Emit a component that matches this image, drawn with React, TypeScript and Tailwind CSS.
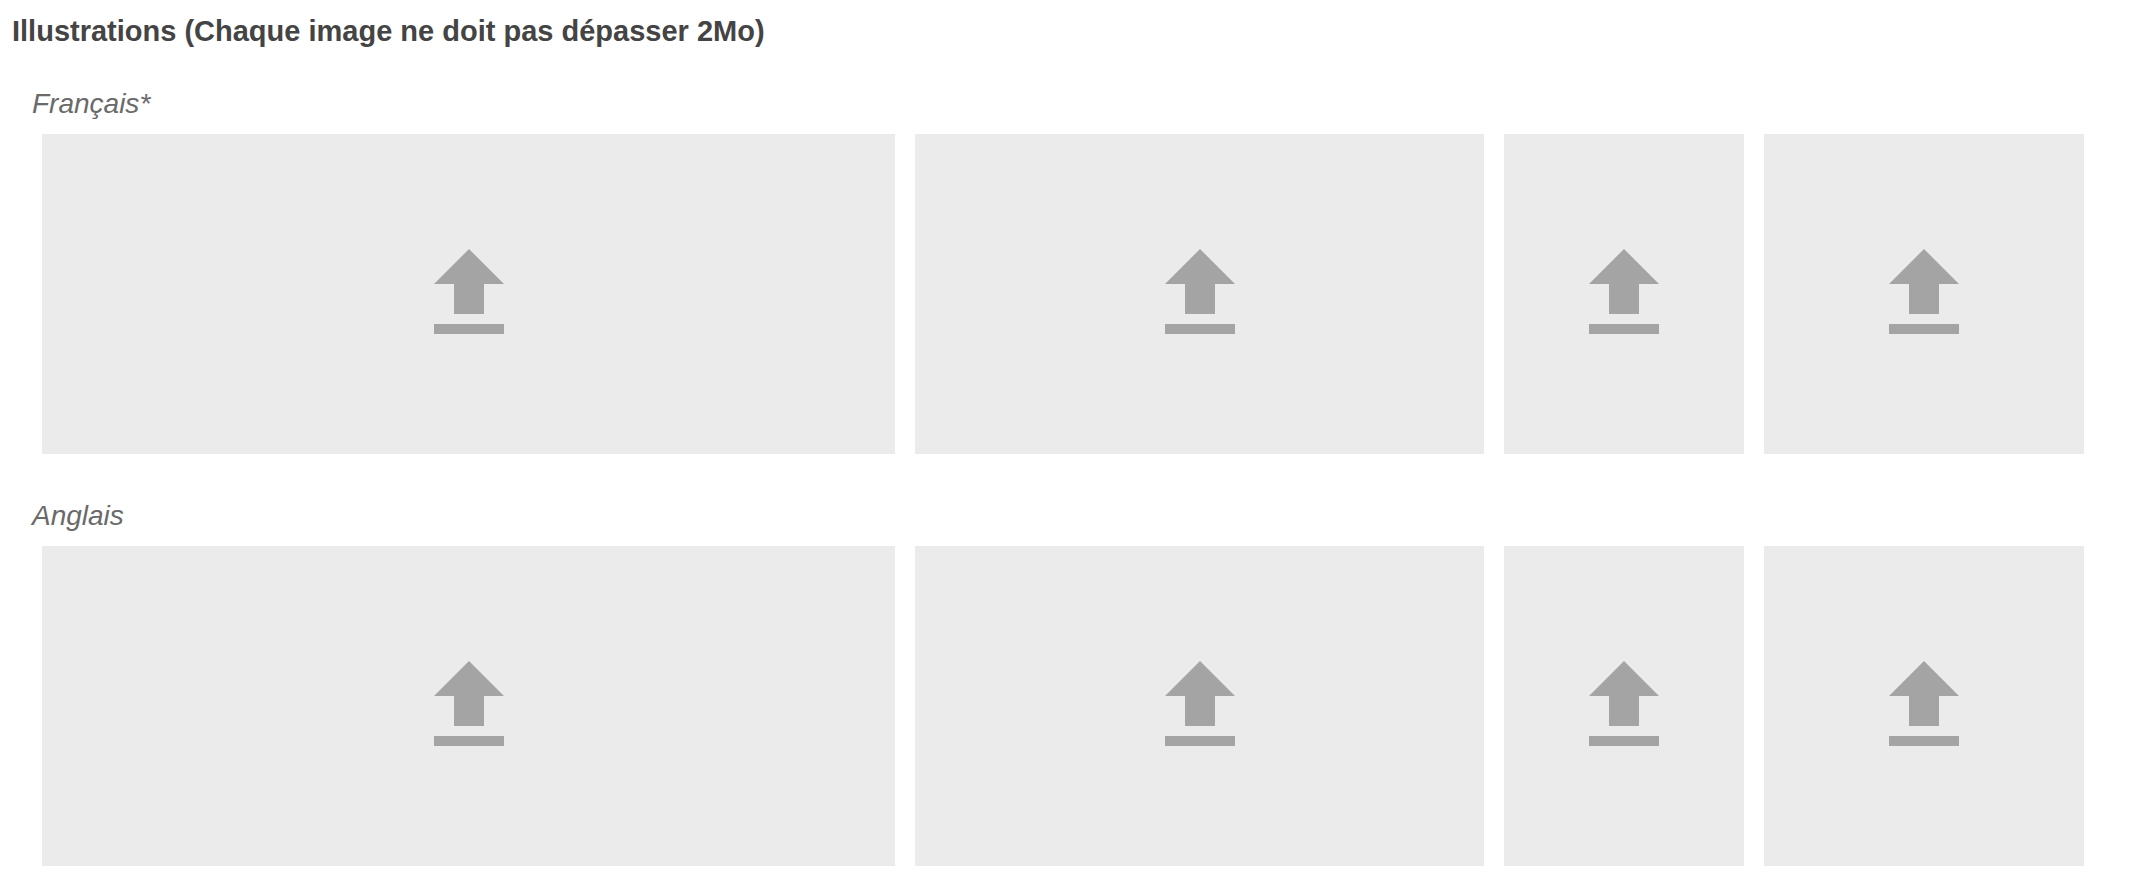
import React, { useState } from 'react';
import clsx from 'clsx';

interface Slot {
  id: string;
  label: string;
  grow: string;
}

interface Language {
  code: string;
  label: string;
  required?: boolean;
}

const SLOTS: Slot[] = [
  { id: 'wide', label: 'grand format', grow: 'grow-[853]' },
  { id: 'landscape', label: 'paysage', grow: 'grow-[569]' },
  { id: 'portrait', label: 'portrait', grow: 'grow-[240]' },
  { id: 'square', label: 'carré', grow: 'grow-[320]' },
];

const LANGUAGES: Language[] = [
  { code: 'fr', label: 'Français', required: true },
  { code: 'en', label: 'Anglais' },
];

const MAX_SIZE = 2 * 1024 * 1024;

function UploadIcon() {
  return (
    <svg viewBox="0 0 24 24" className="h-[120px] w-[120px] flex-shrink-0 fill-[#a4a4a4]" aria-hidden="true">
      <path d="M9 16h6v-6h4l-7-7-7 7h4zm-4 2h14v2H5z" />
    </svg>
  );
}

function UploadTile({ slot, language }: { slot: Slot; language: Language }) {
  const [preview, setPreview] = useState<string | null>(null);
  const inputId = `image-${language.code}-${slot.id}`;

  const handleChange = (e: React.ChangeEvent<HTMLInputElement>) => {
    const file = e.target.files?.[0];
    // Files over 2 Mo are ignored
    if (!file || file.size > MAX_SIZE) return;
    setPreview(URL.createObjectURL(file));
  };

  return (
    <label
      htmlFor={inputId}
      className={clsx(
        'relative flex h-80 min-w-0 basis-0 cursor-pointer items-center justify-center overflow-hidden bg-[#ebebeb]',
        slot.grow
      )}
    >
      <input
        id={inputId}
        type="file"
        accept="image/*"
        aria-label={`${language.label}, ${slot.label}`}
        className="sr-only"
        onChange={handleChange}
      />
      {preview ? <img src={preview} alt="" className="h-full w-full object-cover" /> : <UploadIcon />}
    </label>
  );
}

export default function App() {
  return (
    <main className="bg-white pt-[11px] pr-[60px] pb-[30px] pl-3 font-['Helvetica_Neue','Liberation_Sans',Arial,sans-serif]">
      <h2 className="text-[29px] leading-10 font-bold text-[#444444]">
        Illustrations (Chaque image ne doit pas dépasser 2Mo)
      </h2>

      <div className="mt-[33px] space-y-[42px] pl-5">
        {LANGUAGES.map((language) => (
          <section key={language.code}>
            <h3 className="text-[28px] leading-10 text-[#6a6a6a] italic">
              {language.label}
              {language.required && '*'}
            </h3>
            <div className="mt-[10px] flex gap-5 pl-[10px]">
              {SLOTS.map((slot) => (
                <UploadTile key={slot.id} slot={slot} language={language} />
              ))}
            </div>
          </section>
        ))}
      </div>
    </main>
  );
}
